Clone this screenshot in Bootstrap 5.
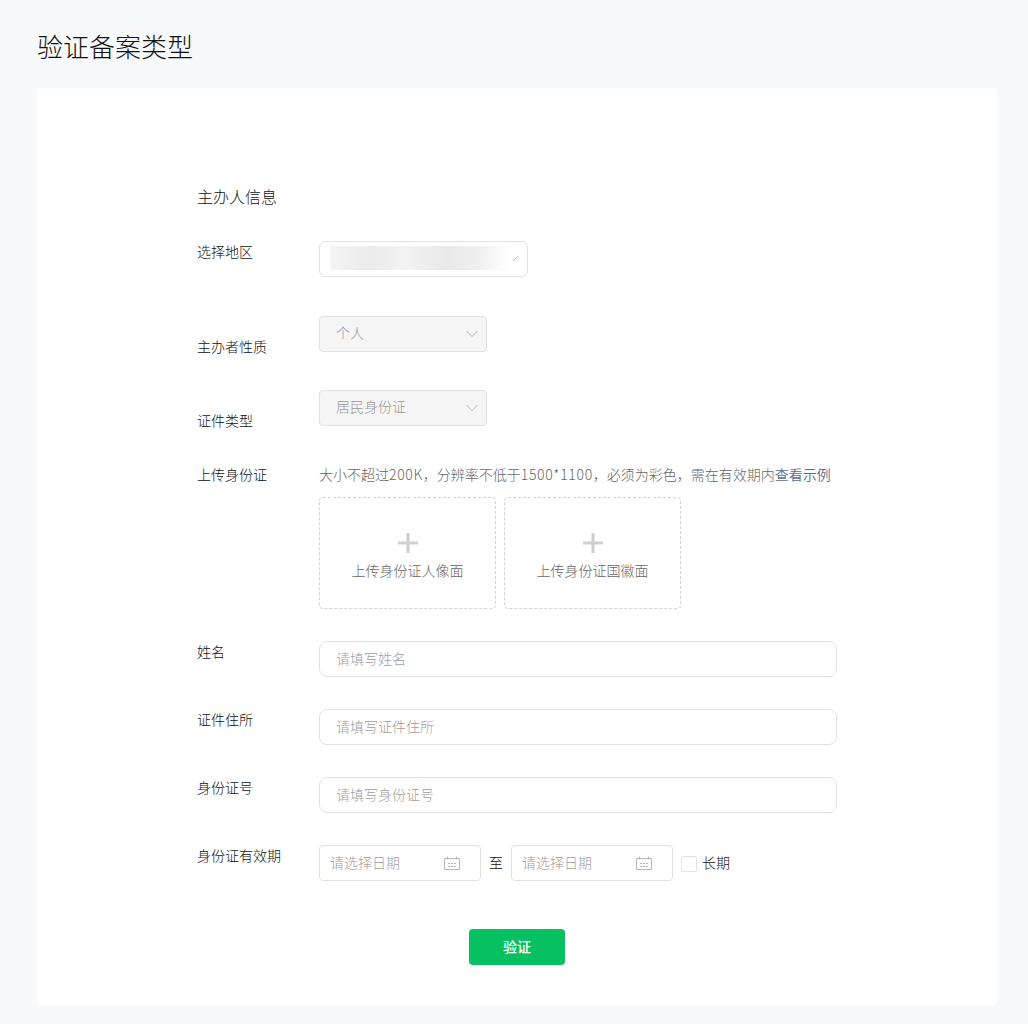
<!DOCTYPE html>
<html lang="zh-CN">
<head>
<meta charset="utf-8">
<title>验证备案类型</title>
<link href="https://cdn.jsdelivr.net/npm/bootstrap@5.3.0/dist/css/bootstrap.min.css" rel="stylesheet">
<style>
body{background:#f8f9fb;font-family:"Noto Sans CJK SC","Liberation Sans",sans-serif;font-size:14px;font-weight:300;color:#353535;min-height:1024px}
.page-wrap{padding:24px 31px 19px 37px}
.page-title{font-size:26px;font-weight:300;line-height:44px;margin:0 0 20px;color:#111}
.panel{background:#fff;border-radius:4px;padding:92px 160px 40px;height:917px}
.sec-title{font-size:16px;line-height:32px;margin:0 0 29px;font-weight:300;color:#111;height:32px}
.form-line{display:flex}
.lbl{width:122px;flex:none;line-height:20px;color:#111}
.lbl-low{padding-top:20px}
.ctl{flex:1;min-width:0}
.fld{height:36px;border:1px solid #e1e1e1;border-radius:6px;background:#fff}
.region{width:209px;padding:4px 10px;position:relative}
.smudge{height:24px;background:linear-gradient(90deg,#f4f4f4 0,#ebebeb 22%,#f3f3f3 40%,#e9e9e9 62%,#f0f0f0 80%,#fff 96%)}
.tick{position:absolute;right:8px;top:13px}
.sel-off.form-select{width:168px;height:36px;border:1px solid #e1e1e1;border-radius:4px;font-size:14px;font-weight:300;color:#999;padding:0 16px 4px;line-height:30px;
background-color:#f5f5f5;opacity:1;background-position:right 8px center;background-size:12px 8px;
background-image:url("data:image/svg+xml,%3csvg xmlns='http://www.w3.org/2000/svg' viewBox='0 0 12 8'%3e%3cpath fill='none' stroke='%23b5b5b5' d='M.5 1l5.5 5.5L11.500 1'/%3e%3c/svg%3e")}
.hint{line-height:20px;color:#666;margin-bottom:13px;white-space:nowrap}
.hint a{color:#576b95;text-decoration:none;font-weight:350}
.num{letter-spacing:.65px}
.up-box{width:177px;height:112px;border:1px dashed #d2d2d2;border-radius:4px;color:#666;padding-top:35px}
.up-box span{display:block;line-height:22px;margin-top:6px}
.txt-in.form-control{width:518px;height:36px;border:1px solid #e1e1e1;border-radius:8px;font-size:14px;font-weight:300;padding:0 16px 2px;color:#353535}
.txt-in.form-control::placeholder{color:#a0a0a0}
.date-box{width:162px;padding:0 20px 0 10px;border-radius:4px}
.date-box span{color:#a0a0a0;margin-top:-2px}
.to-word{margin:0 8px;color:#111;line-height:34px}
.chk.form-check-input{width:16px;height:16px;margin:2px 5px 0 0;border:1px solid #e1e1e1;border-radius:2px}
.long-word{color:#111;margin-top:-2px}
.go-btn.btn{width:96px;height:36px;padding:0 0 2px;background:#07c160;border:0;border-radius:4px;color:#fff;font-size:14px;font-weight:500}
</style>
</head>
<body>
<div class="page-wrap">
  <h1 class="page-title">验证备案类型</h1>
  <main class="panel">
    <h2 class="sec-title d-flex align-items-center">主办人信息</h2>

    <div class="form-line" style="height:75px">
      <div class="lbl">选择地区</div>
      <div class="ctl">
        <div class="fld region"><div class="smudge"></div>
          <svg class="tick" width="7" height="7" viewBox="0 0 7 7"><path d="M1 6L6 1" stroke="#c4c4c4" fill="none"/></svg>
        </div>
      </div>
    </div>

    <div class="form-line" style="height:74px">
      <div class="lbl lbl-low">主办者性质</div>
      <div class="ctl"><select class="form-select sel-off" disabled><option>个人</option></select></div>
    </div>

    <div class="form-line" style="height:74px">
      <div class="lbl lbl-low">证件类型</div>
      <div class="ctl"><select class="form-select sel-off" disabled><option>居民身份证</option></select></div>
    </div>

    <div class="form-line" style="height:177px">
      <div class="lbl">上传身份证</div>
      <div class="ctl">
        <div class="hint">大小不超过<span class="num">200K</span>，分辨率不低于<span class="num">1500*1100</span>，必须为彩色，需在有效期内<a href="#">查看示例</a></div>
        <div class="d-flex gap-2">
          <div class="up-box text-center">
            <svg width="20" height="20" viewBox="0 0 20 20" class="d-block mx-auto"><path d="M0 8.500h20v3H0zM8.500 0h3v20h-3z" fill="#cfcfcf"/></svg>
            <span>上传身份证人像面</span>
          </div>
          <div class="up-box text-center">
            <svg width="20" height="20" viewBox="0 0 20 20" class="d-block mx-auto"><path d="M0 8.500h20v3H0zM8.500 0h3v20h-3z" fill="#cfcfcf"/></svg>
            <span>上传身份证国徽面</span>
          </div>
        </div>
      </div>
    </div>

    <div class="form-line" style="height:68px">
      <div class="lbl">姓名</div>
      <div class="ctl"><input class="form-control txt-in" placeholder="请填写姓名"></div>
    </div>
    <div class="form-line" style="height:68px">
      <div class="lbl">证件住所</div>
      <div class="ctl"><input class="form-control txt-in" placeholder="请填写证件住所"></div>
    </div>
    <div class="form-line" style="height:68px">
      <div class="lbl">身份证号</div>
      <div class="ctl"><input class="form-control txt-in" placeholder="请填写身份证号"></div>
    </div>
    <div class="form-line" style="height:84px">
      <div class="lbl">身份证有效期</div>
      <div class="ctl d-flex align-items-start">
        <div class="fld date-box d-flex align-items-center justify-content-between">
          <span>请选择日期</span>
          <svg width="16" height="14" viewBox="0 0 16 14"><path d="M.5 2.500h15v11H.5zM3.500 .5v3M12.500 .5v3" fill="none" stroke="#b5b5b5"/><path d="M4 7h2v1H4zM7 7h2v1H7zM10 7h2v1h-2zM4 10h2v1H4zM7 10h2v1H7zM10 10h2v1h-2z" fill="#b5b5b5"/></svg>
        </div>
        <span class="to-word">至</span>
        <div class="fld date-box d-flex align-items-center justify-content-between">
          <span>请选择日期</span>
          <svg width="16" height="14" viewBox="0 0 16 14"><path d="M.5 2.500h15v11H.5zM3.500 .5v3M12.500 .5v3" fill="none" stroke="#b5b5b5"/><path d="M4 7h2v1H4zM7 7h2v1H7zM10 7h2v1h-2zM4 10h2v1H4zM7 10h2v1H7zM10 10h2v1h-2z" fill="#b5b5b5"/></svg>
        </div>
        <label class="d-flex align-items-center ms-2" style="height:36px"><input type="checkbox" class="form-check-input chk"><span class="long-word">长期</span></label>
      </div>
    </div>

    <div class="text-center" style="width:640px"><button class="btn go-btn" type="button">验证</button></div>
  </main>
</div>
</body>
</html>
